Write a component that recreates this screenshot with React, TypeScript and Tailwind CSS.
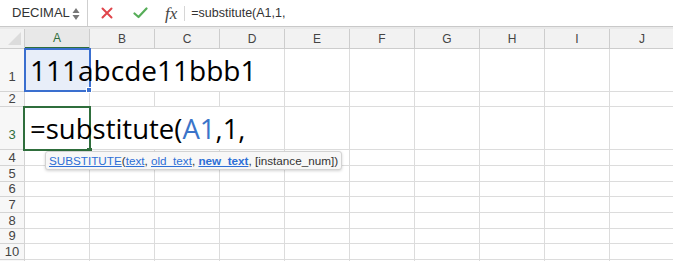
import React from 'react'

const COLS = ['A', 'B', 'C', 'D', 'E', 'F', 'G', 'H', 'I', 'J']

// rows: label, height (incl. bottom border)
const ROWS: { n: number; h: string; tall?: boolean }[] = [
  { n: 1, h: 'h-[43px]', tall: true },
  { n: 2, h: 'h-[15px]' },
  { n: 3, h: 'h-[43px]', tall: true },
  { n: 4, h: 'h-[16px]' },
  { n: 5, h: 'h-[16px]' },
  { n: 6, h: 'h-[15px]' },
  { n: 7, h: 'h-[16px]' },
  { n: 8, h: 'h-[16px]' },
  { n: 9, h: 'h-[15px]' },
  { n: 10, h: 'h-[16px]' },
  { n: 11, h: 'h-[16px]' },
]

function FormulaBar() {
  return (
    <div className="flex h-[27px] items-stretch border-b border-[#c9c9c9] bg-white text-[#333]">
      {/* Name box */}
      <div className="flex w-[88px] items-center justify-between border-r border-[#cfcfcf] pl-[12px] pr-[7px]">
        <span className="text-[13px]">DECIMAL</span>
        <svg width="8" height="16" viewBox="0 0 8 16" className="mt-[1px]">
          <path d="M4 2 L7.5 7 L0.5 7 Z" fill="#777" />
          <path d="M4 14 L7.5 9 L0.5 9 Z" fill="#777" />
        </svg>
      </div>
      {/* cancel / enter / fx */}
      <div className="flex items-center">
        <svg width="12" height="12" viewBox="0 0 12 12" className="ml-[13px]">
          <path d="M1.5 1.5 L10.5 10.5 M10.5 1.5 L1.5 10.5" stroke="#e0454b" strokeWidth="2" strokeLinecap="round" />
        </svg>
        <svg width="15" height="12" viewBox="0 0 15 12" className="ml-[20px]">
          <path d="M1.5 6.5 L5.5 10 L13.5 1.5" stroke="#56ad58" strokeWidth="2.2" fill="none" strokeLinecap="round" strokeLinejoin="round" />
        </svg>
        <span className="ml-[17px] font-['Liberation_Serif',serif] text-[17px] italic leading-none text-[#444]">fx</span>
        <div className="ml-[7px] h-[15px] w-px bg-[#d6d6d6]" />
      </div>
      <div className="ml-[6px] flex items-center text-[12.5px]">=substitute(A1,1,</div>
    </div>
  )
}

function HeaderRow() {
  return (
    <div className="flex h-[20px]">
      <div className="relative w-[25px] shrink-0 border-r border-b border-[#cdcdcd] bg-[#f2f2f2]">
        <svg width="13" height="13" viewBox="0 0 13 13" className="absolute bottom-[3px] right-[3px]">
          <path d="M13 0 L13 13 L0 13 Z" fill="#dcdcdc" />
        </svg>
      </div>
      {COLS.map((c) => (
        <div
          key={c}
          className={`flex w-[65px] shrink-0 items-center justify-center border-r text-[12px] ${
            c === 'A'
              ? 'border-b-2 border-r-[#cdcdcd] border-b-[#2f6e3c] bg-[#e8e8e8] text-[#2f6e3c]'
              : 'border-b border-[#cdcdcd] bg-[#f2f2f2] text-[#444]'
          }`}
        >
          {c}
        </div>
      ))}
    </div>
  )
}

export default function App() {
  return (
    <div className="relative h-[261px] w-[673px] overflow-hidden bg-white font-['Liberation_Sans',Arial,sans-serif]">
      <FormulaBar />
      <div className="h-[2px] bg-[#e9e9e9]" />
      <div className="relative">
        <HeaderRow />
        {ROWS.map((r) => {
          const overflowRow = r.n === 1 || r.n === 3
          return (
            <div key={r.n} className={`flex ${r.h}`}>
              <div
                className={`flex w-[25px] shrink-0 justify-center border-r border-b border-[#d4d4d4] bg-[#f7f7f7] text-[13px] ${
                  r.tall ? 'items-end pb-[6px] leading-[16px]' : 'items-center leading-[14px]'
                } ${r.n === 3 ? 'text-[#2f6e3c]' : 'text-[#444]'}`}
              >
                {r.n}
              </div>
              {COLS.map((c, i) => (
                <div
                  key={c}
                  className={`relative w-[65px] shrink-0 border-b border-[#dcdcdc] ${
                    overflowRow && i < 3 ? '' : 'border-r'
                  } ${r.n === 1 && c === 'A' ? 'bg-[#e8eef9]' : ''}`}
                >
                  {r.n === 1 && c === 'A' && (
                    <span className="absolute bottom-[7px] left-[5px] z-30 whitespace-nowrap font-['Open_Sans',sans-serif] text-[28px] leading-none text-black">
                      111abcde11bbb1
                    </span>
                  )}
                  {r.n === 3 && c === 'A' && (
                    <span className="absolute bottom-[7px] left-[5px] z-30 whitespace-nowrap font-['Open_Sans',sans-serif] text-[27.5px] leading-none text-black">
                      =substitute(<span className="text-[#3b74c9]">A1</span>,1,
                    </span>
                  )}
                </div>
              ))}
            </div>
          )
        })}

        {/* A1 selection */}
        <div className="pointer-events-none absolute left-[24px] top-[19px] z-20 h-[44px] w-[67px] border-2 border-[#3a6fcf]" />
        <div className="absolute left-[86px] top-[58px] z-20 h-[6px] w-[6px] border border-white bg-[#3a6fcf]" />

        {/* A3 editing border */}
        <div className="pointer-events-none absolute left-[23px] top-[77px] z-20 h-[45px] w-[68px] border-2 border-[#2f6e3c]" />
        <div className="absolute left-[87px] top-[119px] z-20 h-[5px] w-[5px] bg-[#2f6e3c]" />
      </div>

      {/* function tooltip */}
      <div className="absolute left-[45px] top-[151px] z-40 flex h-[19px] items-center rounded-[3px] border border-[#d3d3d3] bg-[#f7f7f7] px-[3px] text-[11.7px] text-[#333] shadow-[0_1px_3px_rgba(0,0,0,0.18)]">
        <span className="text-[#2e6fd6] underline">SUBSTITUTE</span>
        <span>(</span>
        <span className="text-[#2e6fd6] underline">text</span>
        <span>,&nbsp;</span>
        <span className="text-[#2e6fd6] underline">old_text</span>
        <span>,&nbsp;</span>
        <span className="font-bold text-[#2e6fd6] underline">new_text</span>
        <span>, [instance_num])</span>
      </div>
    </div>
  )
}
